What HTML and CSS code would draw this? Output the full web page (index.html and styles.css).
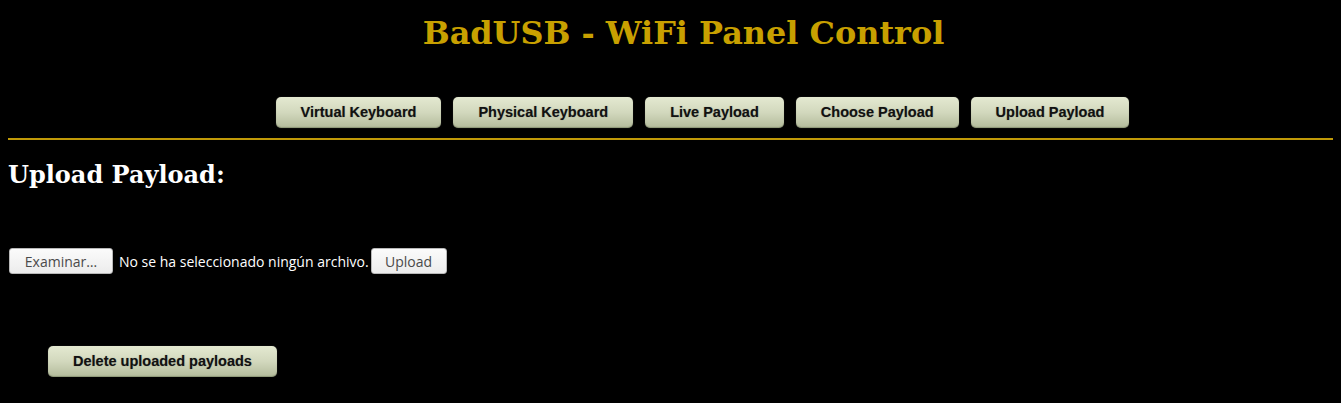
FILE: index.html
```html
<!DOCTYPE html>
<html lang="es">
<head>
<meta charset="utf-8">
<title>BadUSB - WiFi Panel Control</title>
<link rel="stylesheet" href="styles.css">
</head>
<body>
<header class="top">
  <h1 class="title">BadUSB - WiFi Panel Control</h1>
  <nav class="menu">
    <button class="btn">Virtual Keyboard</button>
    <button class="btn">Physical Keyboard</button>
    <button class="btn">Live Payload</button>
    <button class="btn">Choose Payload</button>
    <button class="btn">Upload Payload</button>
  </nav>
</header>
<main class="content">
  <h2 class="section-title">Upload Payload:</h2>
  <form class="upload-form">
    <span class="file-btn">Examinar…</span>
    <span class="file-label">No se ha seleccionado ningún archivo.</span>
    <span class="file-btn upload-btn">Upload</span>
  </form>
  <div class="delete-row">
    <button class="btn">Delete uploaded payloads</button>
  </div>
</main>
</body>
</html>
```
FILE: styles.css
```css
html, body {
  background: #000;
}
body {
  margin: 0;
  padding: 0 8px;
  color: #fff;
}
.top {
  padding-top: 15px;
}
.title {
  margin: 0;
  padding-left: 26px;
  text-align: center;
  font-family: "DejaVu Serif", serif;
  font-weight: bold;
  font-size: 31.9px;
  line-height: 37px;
  color: #c8a000;
}
.menu {
  margin-top: 45px;
  padding-left: 64px;
  padding-bottom: 10px;
  display: flex;
  justify-content: center;
  gap: 12px;
  border-bottom: 2px solid #c09a08;
}
.btn {
  font-family: "Liberation Sans", Arial, sans-serif;
  font-weight: bold;
  font-size: 14.5px;
  line-height: 17px;
  padding: 7px 25px;
  border: 0;
  border-radius: 5px;
  color: #111;
  background: linear-gradient(to bottom, #e4e9d1 0%, #d2d8bd 50%, #b3bb9b 100%);
  box-shadow: inset 0 -1px 1px rgba(70, 80, 50, 0.35), 0 0 1px rgba(255,255,255,0.3);
  text-shadow: 0 0 1px rgba(60, 60, 60, 0.5);
  white-space: nowrap;
}
.content {
  padding: 0;
}
.section-title {
  margin: 21px 0 0;
  font-family: "DejaVu Serif", serif;
  font-weight: bold;
  font-size: 24px;
  line-height: 28px;
  color: #fff;
}
.upload-form {
  margin-top: 59px;
  display: flex;
  align-items: center;
  font-family: "Open Sans", "DejaVu Sans", sans-serif;
  font-size: 14px;
}
.file-btn {
  box-sizing: border-box;
  height: 26px;
  display: inline-flex;
  align-items: center;
  justify-content: center;
  border: 1px solid #b8b8b8;
  border-radius: 3px;
  background: linear-gradient(to bottom, #fbfbfb, #ececec);
  color: #4a4a4a;
  width: 104px;
  margin-left: 1px;
}
.file-label {
  margin-left: 6px;
  margin-right: 2px;
  color: #fff;
}
.upload-btn {
  width: 76px;
  margin-left: 0;
}
.delete-row {
  margin-top: 72px;
  padding-left: 40px;
}
```
